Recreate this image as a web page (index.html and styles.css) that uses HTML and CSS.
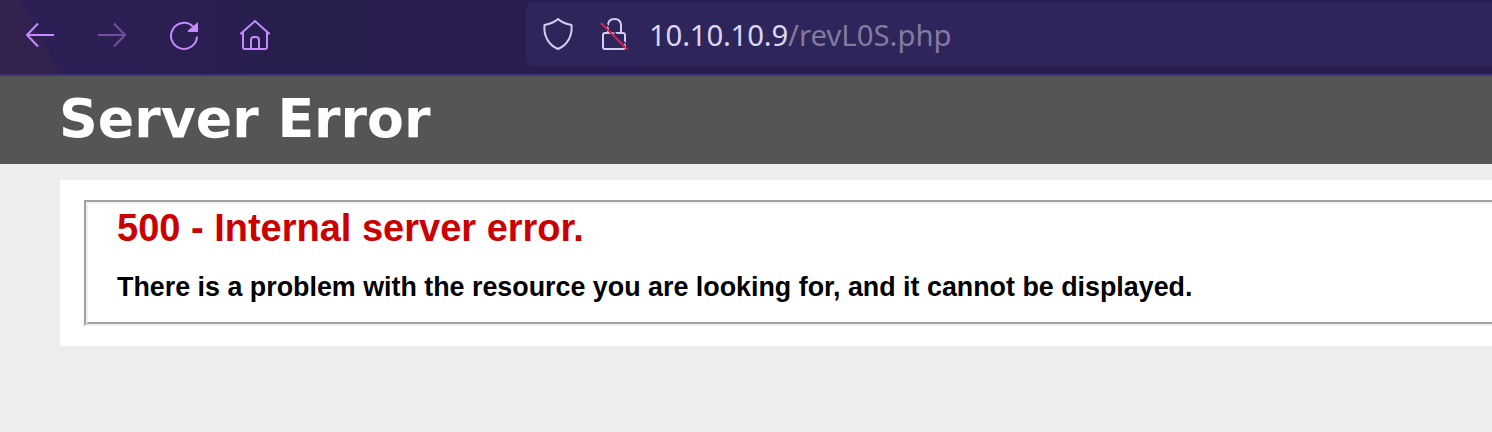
FILE: index.html
```html
<!DOCTYPE html>
<html lang="en">
<head>
<meta charset="utf-8">
<title>500 - Internal server error.</title>
<link rel="stylesheet" href="styles.css">
</head>
<body>
<nav class="toolbar">
  <div class="buttons">
    <svg class="icon" viewBox="0 0 32 32"><path d="M30 16H3M14 4.500L3 16l11 11.500"/></svg>
    <svg class="icon disabled" viewBox="0 0 32 32"><path d="M2 16h27M18 4.500L29 16 18 27.500"/></svg>
    <svg class="icon" viewBox="0 0 32 32"><path d="M25 7.500A13 13 0 1 0 29 17.500"/><path class="solid" d="M30 3v10H20.500q-1.500-.5-.5-1.500z"/></svg>
    <svg class="icon" viewBox="0 0 32 32"><path d="M1 14.500L15 2l14 12.500M3 13v15q0 2 2 2h20q2 0 2-2V13M11 30V21q0-3 3-3h2q3 0 3 3v9" stroke-linecap="round"/></svg>
  </div>
  <div class="address">
    <svg class="icon" viewBox="0 0 32 32"><path d="M16 1Q11 5.500 2.500 7C1.500 17 6 27 16 31 26 27 30.500 17 29.500 7Q21 5.500 16 1z" stroke-linejoin="round"/></svg>
    <svg class="icon lock" viewBox="0 0 32 32"><path d="M8 15V7.500Q8 1 14.500 1T21 7.500V15M5 15h18q2 0 2 2v12q0 2-2 2H5q-2 0-2-2V17q0-2 2-2z"/><path class="gap" d="M3 3L29.500 29.500"/><path class="strike" d="M1 5L27.500 31.500"/></svg>
    <div class="url"><span class="host">10.10.10.9</span><span class="path">/revL0S.php</span></div>
  </div>
</nav>
<header class="header"><h1>Server Error</h1></header>
<main class="content">
  <section class="card">
    <div class="frame">
      <div class="frame-inner">
        <h2>500 - Internal server error.</h2>
        <h3>There is a problem with the resource you are looking for, and it cannot be displayed.</h3>
      </div>
    </div>
  </section>
</main>
</body>
</html>
```
FILE: styles.css
```css
* { box-sizing: border-box; }
body { margin: 0; background: #ededed; overflow: hidden; }
h1, h2, h3 { margin: 0; white-space: nowrap; }

.toolbar {
  display: flex;
  height: 76px;
  padding-top: 2px;
  border-bottom: 2px solid #3d3178;
  background:
    linear-gradient(62deg, #34224e 0, #33224f 52px, transparent 53px),
    linear-gradient(90deg, #2b1f55 0, #2c1f53 150px, #281e4e 260px, #281d4e 100%);
}
.buttons { display: flex; gap: 40px; width: 526px; padding: 17px 0 0 24px; }
.icon {
  display: block;
  flex: none;
  width: 32px;
  height: 32px;
  overflow: visible;
  fill: none;
  stroke: #c58aff;
  stroke-width: 2;
}
.icon .solid { fill: #c58aff; stroke: none; }
.disabled { opacity: .45; }

.address {
  display: flex;
  flex: 1;
  height: 64px;
  padding-left: 16px;
  background: #2e255b;
  border-radius: 8px 0 0 8px;
}
.address .icon { margin-top: 16px; stroke: #d5cdf0; }
.address .lock { margin-left: 26px; }
.icon .gap { stroke: #2e255b; stroke-width: 1.5; }
.icon .strike { stroke: #e8184a; stroke-width: 2.2; }
.url {
  margin-left: 17px;
  padding-top: 1px;
  font: 29.333px/64px "Noto Sans", sans-serif;
  color: #dcd5f5;
  white-space: nowrap;
}
.host { letter-spacing: -.2px; }
.path { color: #827a9f; }

.header { height: 88px; padding: 1px 0 0 59px; background: #555; color: #fff; }
.header h1 { font: bold 53.76px/84px "DejaVu Sans", sans-serif; }

.content { padding: 16px 0 0 60px; }
.card { height: 166px; padding: 20px 0 0 24px; background: #fff; }
.frame {
  height: 126px;
  border: solid #a0a0a0;
  border-width: 2px 0 2px 2px;
  border-bottom-color: #f0f0f0;
}
.frame-inner {
  height: 122px;
  padding: 2px 0 0 29px;
  border: solid #f0f0f0;
  border-width: 2px 0 2px 2px;
  border-bottom-color: #a0a0a0;
}
.frame h2 { font: bold 38px/44px "Liberation Sans", Arial, sans-serif; color: #c00; }
.frame h3 { margin-top: 21px; font: bold 26.85px/32px "Liberation Sans", Arial, sans-serif; color: #000; }
```
